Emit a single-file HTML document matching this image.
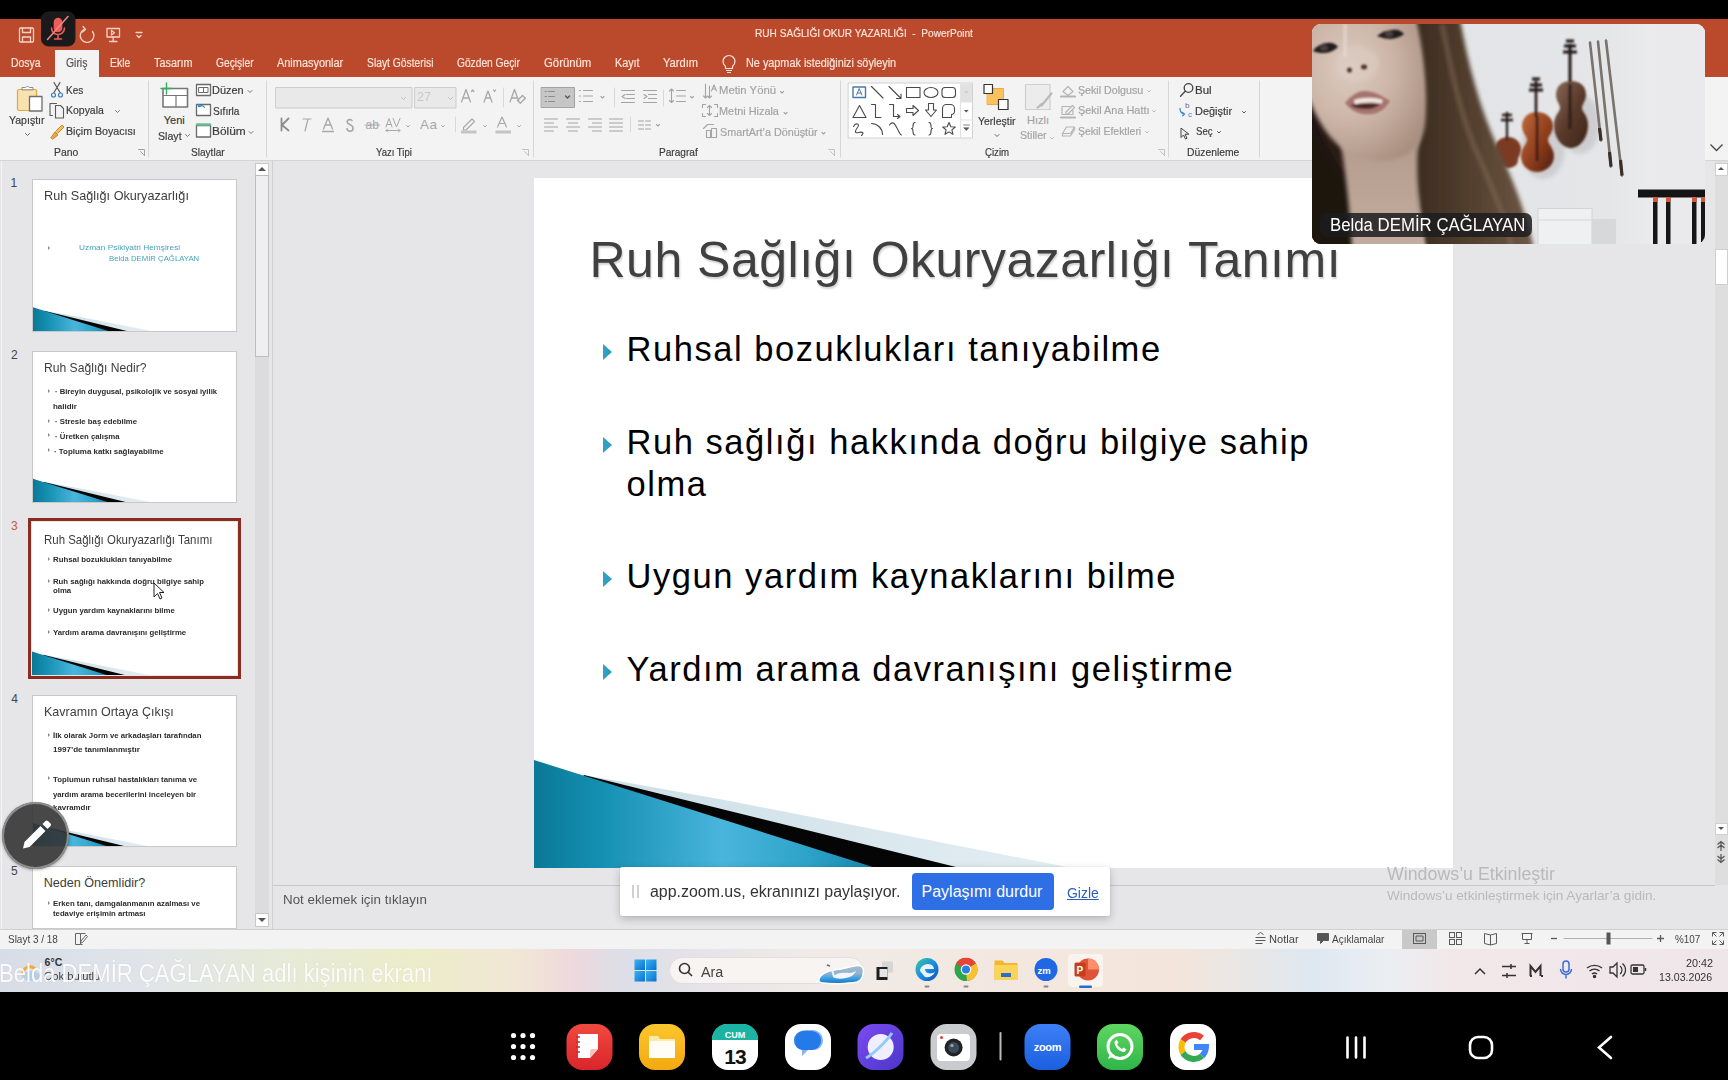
<!DOCTYPE html>
<html><head><meta charset="utf-8">
<style>
*{margin:0;padding:0;box-sizing:border-box}
html,body{width:1728px;height:1080px;overflow:hidden;background:#000;font-family:"Liberation Sans",sans-serif}
.a{position:absolute}
.t{position:absolute;white-space:nowrap;line-height:1}
.rb .t{-webkit-text-stroke:0.18px currentColor}
#title{left:0;top:19px;width:1728px;height:58px;background:#bb4a2c}
.tab{position:absolute;top:57px;font-size:12px;color:#fbe3d9;white-space:nowrap;line-height:1}
#ribbon{left:0;top:77px;width:1728px;height:84px;background:#f3f3f3;border-bottom:1px solid #d4d4d4}
.rb{position:absolute;font-size:11px;color:#333;white-space:nowrap;line-height:1}
.dis{color:#a8a8a8}
.gl{position:absolute;top:149px;font-size:11px;color:#444;white-space:nowrap;line-height:1}
.sep{position:absolute;top:82px;width:1px;height:76px;background:#d8d8d8}
#pane{left:0;top:161px;width:1728px;height:768px;background:#e6e6e8}
#status{left:0;top:929px;width:1728px;height:20px;background:#f3f3f3;border-top:1px solid #d0d0d0}
#taskbar{left:0;top:949px;width:1728px;height:43px;background:linear-gradient(90deg,#dfe3ec 0%,#e7ecf2 20%,#eef0dc 35%,#f1eedd 48%,#f3e6dc 62%,#e2ebf3 70%,#efe8ec 85%,#dde1ea 100%)}
#nav{left:0;top:992px;width:1728px;height:88px;background:#000}
#slide{left:534px;top:178px;width:919px;height:690px;background:#fff;overflow:hidden}
.thumb{position:absolute;left:32px;width:205px;height:154px;background:#fff;border:1px solid #c6c6c6;overflow:hidden}
.num{position:absolute;left:11px;font-size:13px;color:#444;line-height:1}
.tt{position:absolute;left:11px;top:12px;font-size:12.5px;color:#404040;white-space:nowrap;line-height:1}
.tb{position:absolute;font-size:7px;color:#2a2a2a;font-weight:bold;white-space:nowrap;line-height:1;letter-spacing:0.3px}
.tb:before{content:"";position:absolute;left:-5px;top:2px;border-left:2.5px solid #2a9ec0;border-top:2px solid transparent;border-bottom:2px solid transparent}
.bul{position:absolute;left:626.5px;font-size:34.5px;color:#000;letter-spacing:1.55px;white-space:nowrap;line-height:1}
.tri{position:absolute;left:603px;width:0;height:0;border-left:9px solid #2fa0c3;border-top:8px solid transparent;border-bottom:8px solid transparent}
</style></head>
<body>
<svg width="0" height="0" style="position:absolute"><defs>
<linearGradient id="bg1" x1="0" y1="0" x2="1" y2="0">
<stop offset="0" stop-color="#0a7896"/><stop offset="0.2" stop-color="#1590b2"/><stop offset="0.55" stop-color="#4ab5dc"/><stop offset="0.8" stop-color="#2ea3c9"/><stop offset="1" stop-color="#1288ae"/></linearGradient>
<linearGradient id="gg1" x1="0" y1="0" x2="1" y2="0">
<stop offset="0" stop-color="#c9dde6"/><stop offset="1" stop-color="#e4eef2"/></linearGradient>
<symbol id="wedge" viewBox="0 0 919 690" preserveAspectRatio="none">
<polygon points="50,597 196,623 538,690 0,690" fill="url(#gg1)"/>
<polygon points="50,597 426,690 0,690" fill="#050505"/>
<polygon points="0,582 50,597.8 196,643.8 342,690 0,690" fill="url(#bg1)"/>
</symbol></defs></svg>
<!-- title bar -->
<div id="title" class="a"></div>
<div class="rb">
<div class="t" style="left:754.8px;top:28.4px;font-size:11.00px;color:#fbe3d9;transform:scaleX(0.918);transform-origin:0 0;white-space:pre;">RUH SAĞLIĞI OKUR YAZARLIĞI  -  PowerPoint</div>
<div class="a" style="left:55px;top:50px;width:43.5px;height:28px;background:#f3f3f3"></div>
<div class="t" style="left:11.1px;top:57.3px;font-size:12.00px;color:#fbe3d9;transform:scaleX(0.868);transform-origin:0 0;">Dosya</div>
<div class="t" style="left:65.5px;top:57.3px;font-size:12.00px;color:#555;transform:scaleX(0.867);transform-origin:0 0;">Giriş</div>
<div class="t" style="left:110.2px;top:57.3px;font-size:12.00px;color:#fbe3d9;transform:scaleX(0.870);transform-origin:0 0;">Ekle</div>
<div class="t" style="left:153.8px;top:57.3px;font-size:12.00px;color:#fbe3d9;transform:scaleX(0.904);transform-origin:0 0;">Tasarım</div>
<div class="t" style="left:215.5px;top:57.3px;font-size:12.00px;color:#fbe3d9;transform:scaleX(0.856);transform-origin:0 0;">Geçişler</div>
<div class="t" style="left:277.0px;top:57.3px;font-size:12.00px;color:#fbe3d9;transform:scaleX(0.911);transform-origin:0 0;">Animasyonlar</div>
<div class="t" style="left:367.2px;top:57.3px;font-size:12.00px;color:#fbe3d9;transform:scaleX(0.859);transform-origin:0 0;">Slayt Gösterisi</div>
<div class="t" style="left:457.2px;top:57.3px;font-size:12.00px;color:#fbe3d9;transform:scaleX(0.851);transform-origin:0 0;">Gözden Geçir</div>
<div class="t" style="left:544.4px;top:57.3px;font-size:12.00px;color:#fbe3d9;transform:scaleX(0.945);transform-origin:0 0;">Görünüm</div>
<div class="t" style="left:614.5px;top:57.3px;font-size:12.00px;color:#fbe3d9;transform:scaleX(0.898);transform-origin:0 0;">Kayıt</div>
<div class="t" style="left:662.7px;top:57.3px;font-size:12.00px;color:#fbe3d9;transform:scaleX(0.926);transform-origin:0 0;">Yardım</div>
<div class="t" style="left:745.6px;top:57.3px;font-size:12.00px;color:#fbe3d9;transform:scaleX(0.904);transform-origin:0 0;">Ne yapmak istediğinizi söyleyin</div>
</div>
<!-- ribbon -->
<div id="ribbon" class="a"></div>
<svg class="a" style="left:0;top:0" width="1312" height="161" viewBox="0 0 1312 161" fill="none" stroke-linecap="round" stroke-linejoin="round">
<g stroke="#d6d6d6" stroke-width="1"><path d="M148.5 81V157M266.5 81V157M533.5 81V157M840.5 81V157M1168.5 81V157M1259.5 81V157"/></g>
<!-- QAT -->
<g stroke="#f7d2c4" stroke-width="1.3">
<rect x="19.5" y="28" width="14" height="14" rx="1"/><path d="M22.5 28v4.5h8V28M22.5 42v-5h8v5"/>
<path d="M92.5 31.5A6.8 6.8 0 1 1 84 29.5"/><path d="M83 26.5l2.5 3-3 2.5"/>
<rect x="107" y="28.5" width="12.5" height="8.5"/><path d="M113.2 37v4.5M109.5 41.5h7.5M111.5 30.5v4.5l3-2.2z"/>
<path d="M136 32.5h6M137 35.5l2 2 2-2"/>
</g>
<!-- mic overlay -->
<rect x="41.5" y="12" width="33.5" height="34" rx="7" fill="#1a1a1c" stroke="#2a1b18" stroke-width="1"/>
<g stroke="#ef5b5b" stroke-width="1.6"><rect x="54.5" y="18.5" width="7" height="13" rx="3.5" fill="#ef5b5b"/><path d="M51.5 28a6.5 6.5 0 0 0 13 0M58 34.5v4M54.5 39h7"/><path d="M68 16.5L47.5 39.5" stroke="#ec8b80" stroke-width="1.5"/></g>
<!-- close X over video right -->
<g stroke="#f5d6cc" stroke-width="1.4"><path d="M1705 29l8.5 8.5M1713.5 29l-8.5 8.5"/></g>
<!-- Pano icons -->
<rect x="17.5" y="89.5" width="19" height="21" rx="1.5" fill="#f8e2ae" stroke="#e0a640" stroke-width="1.2"/>
<path d="M22 89.5v-2h3.5a2.5 2.5 0 0 1 4 0H33v2z" fill="#fff" stroke="#8a8a8a" stroke-width="1"/>
<rect x="29.5" y="96.5" width="12.5" height="14.5" fill="#fff" stroke="#6f6f6f" stroke-width="1.3"/>
<path d="M25.5 133.5l2 2 2-2" stroke="#666" stroke-width="1"/>
<g stroke="#555" stroke-width="1.2"><path d="M54 82.5l6 10M60 82.5l-6 10"/><circle cx="53.5" cy="95" r="2" stroke="#3c7fbf"/><circle cx="60.5" cy="95" r="2" stroke="#3c7fbf"/></g>
<g stroke="#5a5a5a" stroke-width="1.1"><path d="M52.5 115.5h-2.5v-12h6.5"/><path d="M55.5 105.5h5l3 3v9.5h-8z"/></g>
<path d="M56 131l6-6 2 2-6 6z" fill="#f3c35a" stroke="#c9862a" stroke-width="1"/><path d="M51 137.5l4-5.5 3 3-5 4z" fill="#f0a640" stroke="#c9862a" stroke-width="1"/>
<path d="M115.5 110.5l2 2 2-2M185.5 134.5l2 2 2-2M248 90.5l2 2 2-2M249 131.5l2 2 2-2" stroke="#777" stroke-width="1"/>
<g stroke="#999" stroke-width="0.9"><path d="M138.5 149.5h6v6M140.5 151.5l4 4"/></g>
<!-- Slaytlar icons -->
<rect x="163" y="88.5" width="24.5" height="18.5" fill="#fff" stroke="#777" stroke-width="1.6"/><path d="M163.5 95.5h24M176 95.5v11" stroke="#777" stroke-width="1.2"/>
<path d="M166.5 83v11M161 88.5h11" stroke="#3aa860" stroke-width="1.4"/>
<rect x="196.5" y="84.5" width="14" height="11" fill="#fff" stroke="#6a6a6a" stroke-width="1.3"/><path d="M199 87.5h9v5h-9zM203.5 87.5v5" stroke="#6a6a6a" stroke-width="1"/>
<rect x="196.5" y="104.5" width="14" height="11" fill="#fff" stroke="#6a6a6a" stroke-width="1.3"/><path d="M198.5 106.5a4 4 0 0 1 6 1M198 104.5l0.8 2.2 2.2-0.6" stroke="#3c89c9" stroke-width="1.2"/>
<rect x="196.5" y="125.5" width="14" height="11.5" fill="#fff" stroke="#6a6a6a" stroke-width="1.3"/><path d="M197 124.5h13" stroke="#6bbf8e" stroke-width="2.4"/>
<!-- Yazi tipi -->
<rect x="276" y="87.5" width="136" height="20.5" fill="#e9e9e9" stroke="#cdcdcd" stroke-width="1"/>
<rect x="415" y="87.5" width="41" height="20.5" fill="#e9e9e9" stroke="#cdcdcd" stroke-width="1"/>
<path d="M401.5 97.5l2 2 2-2M448.5 97.5l2 2 2-2" stroke="#bbb" stroke-width="1"/>
<g stroke="#a8a8a8" stroke-width="1.3">
<path d="M461.5 102l4.5-12.5 4.5 12.5M463.2 98h5.6M471.5 91.5l1.2-1.5 1.2 1.5"/>
<path d="M484 102l4-11 4 11M485.5 98h5M493.5 90l1 1.5 1-1.5"/>
<path d="M503.5 88v19" stroke="#d8d8d8" stroke-width="1"/>
<path d="M510 102l4.5-12.5 4.5 12.5M511.7 98h5.6M517.5 100.5l5-5 2.8 2.8-5 5z"/>
<path d="M281.5 118.5v12M288.5 118.5l-6.5 6.5 6.5 5.5" stroke="#8c8c8c" stroke-width="1.8"/>
<path d="M303 119h8M308 119l-3 12" stroke-width="1.2"/>
<path d="M323.5 129l4.5-11 4.5 11M325.2 125h5.6M322.5 131.5h11"/>
<path d="M352 120.5a3 3 0 0 0-5 1c0 3.5 6 2.5 6 6.5a3 3 0 0 1-6 0.5" stroke-width="1.6"/>
<path d="M365 125h14.5" stroke-width="1.1"/>
<path d="M386 127l3-8.5 3 8.5M387 124.5h4M393 118.5l3.5 8.5 3.5-8.5M386 130.5h14M387.5 129l-1.5 1.5 1.5 1.5M398.5 129l1.5 1.5-1.5 1.5" stroke-width="1"/>
<path d="M406.5 125.5l1.5 1.5 1.5-1.5M441.5 125.5l1.5 1.5 1.5-1.5M483.5 125.5l1.5 1.5 1.5-1.5M517.5 125.5l1.5 1.5 1.5-1.5" stroke-width="1"/>

<path d="M455.5 117v15" stroke="#d8d8d8" stroke-width="1"/>
<path d="M463.5 127.5l8.5-8.5 2.5 2.5-8.5 8.5h-2.5z" stroke-width="1.2"/>
<path d="M497.5 127l4.5-10 4.5 10M499 123.5h6" stroke-width="1.2"/>
</g>
<rect x="461" y="130.5" width="15.5" height="3" fill="#c4c4c4"/><rect x="495.5" y="130.5" width="15.5" height="3" fill="#c4c4c4"/>
<g stroke="#bbb" stroke-width="0.9"><path d="M522.5 149.5h6v6M524.5 151.5l4 4M828.5 149.5h6v6M830.5 151.5l4 4M1158.5 149.5h6v6M1160.5 151.5l4 4"/></g>
<!-- Paragraf -->
<rect x="541.5" y="87.5" width="33" height="20" fill="#c6c6c6" stroke="#a3a3a3" stroke-width="1"/>
<g stroke="#8d8d8d" stroke-width="1"><path d="M545 91.5h1.5M548.5 91.5h6M545 96.5h1.5M548.5 96.5h6M545 101.5h1.5M548.5 101.5h6"/><path d="M565.5 96l2 2 2-2" stroke="#555" stroke-width="1.3"/></g>
<g stroke="#a4a4a4" stroke-width="1.1">
<path d="M579.5 90.5h1M579.5 96h1M579.5 101.5h1M583.5 90.5h9M583.5 96h9M583.5 101.5h9"/><path d="M601 96.5l1.5 1.5 1.5-1.5M690.5 96.5l1.5 1.5 1.5-1.5"/>
<path d="M614.5 88v19M663.5 90v16" stroke="#d8d8d8" stroke-width="1"/>
<path d="M621.5 90.5h13M626.5 94.5h8M626.5 98.5h8M621.5 102.5h13M625 94.5l-3 2 3 2"/>
<path d="M643.5 90.5h13M648.5 94.5h8M648.5 98.5h8M643.5 102.5h13M644 94.5l3 2-3 2"/>
<path d="M676.5 90.5h9M676.5 96h9M676.5 101.5h9M671.5 89v13.5M669.5 91l2-2 2 2M669.5 100.5l2 2 2-2"/>
<path d="M705.5 84v14M703.5 96l2 2 2-2M709.5 86v12M707.5 96l2 2 2-2M711.5 91l2.5-6 2.5 6M712.3 89h3.5"/>
<path d="M702.5 104.5h3M702.5 104.5v3M717.5 104.5h-3M717.5 104.5v3M702.5 116.5h3M702.5 116.5v-3M717.5 116.5h-3M717.5 116.5v-3M709.5 105.5v10M707.5 107.5l2-2 2 2M707.5 113.5l2 2 2-2"/>
<path d="M703.5 128.5l4-4h6M706.5 130.5h4v7h-4zM711.5 128.5h5v9h-5z"/>
<path d="M780.5 91.5l1.5 1.5 1.5-1.5M784 112.5l1.5 1.5 1.5-1.5M822 132.5l1.5 1.5 1.5-1.5"/>
<path d="M544.5 119h13M544.5 123h9M544.5 127h13M544.5 131h9"/>
<path d="M566.5 119h13M568.5 123h9M566.5 127h13M568.5 131h9"/>
<path d="M588.5 119h13M592.5 123h9M588.5 127h13M592.5 131h9"/>
<path d="M609.5 119h13M609.5 123h13M609.5 127h13M609.5 131h13"/>
<path d="M630.5 117v15" stroke="#d8d8d8" stroke-width="1"/>
<path d="M638.5 121h5M638.5 125h5M638.5 129h5M645.5 121h5M645.5 125h5M645.5 129h5M656.5 124.5l1.5 1.5 1.5-1.5"/>
</g>
<!-- Cizim gallery -->
<rect x="848.5" y="83" width="124" height="55" fill="#fff" stroke="#d2d2d2" stroke-width="1"/>
<rect x="960.5" y="83.5" width="11.5" height="18.5" fill="#e1e1e1"/>
<path d="M960.5 83v55M960.5 102h12M960.5 120h12" stroke="#e3e3e3" stroke-width="1"/>
<path d="M965 92h2.5" stroke="#bbb" stroke-width="1"/>
<path d="M964 110l2.3 2.5 2.3-2.5z" fill="#555"/><path d="M963.5 125h6M964 128l2.3 2.5 2.3-2.5z" stroke="#666" stroke-width="0.8" fill="#555"/>
<g stroke="#4a4a4a" stroke-width="1.1">
<rect x="853" y="87" width="12.5" height="10.5" stroke="#4a79a7" stroke-width="1.4"/><path d="M856.5 95l2.7-6.5 2.7 6.5M857.5 93h3.5" stroke="#4a79a7" stroke-width="1"/>
<path d="M871.5 86.5l11.5 11.5"/><path d="M889 86.5l11.5 11.5M901 98.5v-4.5M901 98.5h-4.5"/>
<rect x="906.5" y="87.5" width="13.5" height="10"/><ellipse cx="931" cy="92.5" rx="7" ry="5"/><rect x="942" y="87.5" width="13.5" height="10" rx="3"/>
<path d="M853 117.5l6.5-12 6.5 12z"/><path d="M871.5 104.5h4v13h5.5"/><path d="M889.5 104.5h4v12h6M897.5 114.5l2.5 2-2.5 2"/>
<path d="M906.5 108.5h6.5v-3l5.5 5-5.5 5v-3h-6.5z"/><path d="M928.5 103.5h5v6.5h3l-5.5 6.5-5.5-6.5h3z"/>
<path d="M942.5 117.5v-9a4 4 0 0 1 4-4h4a4 4 0 0 1 4 4v3a3 3 0 0 1-3 3v3z"/>
<path d="M853.5 126.5c2-4 7-3 4 1s-3 6 1 5 6 0 3 3"/><path d="M871.5 123.5c6 0 11 5 11 11"/><path d="M889.5 125c4-6 7 2 9 6s3 4 3 4"/>
<path d="M915 122.5c-2 0-2 1.5-2 3.5s0 2.5-1.5 2.5c1.5 0 1.5 1 1.5 3s0 3.5 2 3.5"/><path d="M929 122.5c2 0 2 1.5 2 3.5s0 2.5 1.5 2.5c-1.5 0-1.5 1-1.5 3s0 3.5-2 3.5"/>
<path d="M949 122.5l1.8 4.2 4.5.3-3.4 2.9 1.1 4.4-4-2.4-4 2.4 1.1-4.4-3.4-2.9 4.5-.3z"/>
</g>
<!-- Yerlestir -->
<rect x="987.5" y="88.5" width="16" height="16" fill="#f9c25f" stroke="#f0a93a" stroke-width="1"/>
<rect x="984" y="84.5" width="8.5" height="9" fill="#fff" stroke="#333" stroke-width="1.2"/>
<rect x="998.5" y="99.5" width="9.5" height="10" fill="#fff" stroke="#333" stroke-width="1.2"/>
<path d="M995 134.5l2 2 2-2" stroke="#666" stroke-width="1"/>
<!-- Hizli stiller -->
<rect x="1025.5" y="84.5" width="24.5" height="25" fill="#ececec" stroke="#cfcfcf" stroke-width="1.2"/>
<path d="M1051.5 93.5l-10 12M1042 104c-2 1-3 3-4.5 3.5" stroke="#b9b9b9" stroke-width="2.2"/>
<path d="M1050.5 137.5l1.5 1.5 1.5-1.5M1147.5 90.5l1.5 1.5 1.5-1.5M1152.5 110.5l1.5 1.5 1.5-1.5M1145.5 131.5l1.5 1.5 1.5-1.5" stroke="#bbb" stroke-width="1"/>
<g stroke="#b5b5b5" stroke-width="1.2">
<path d="M1063 91.5l5-5 5 5-5 4z"/><path d="M1061 96.5h14" stroke-width="2.2"/>
<path d="M1062 106.5h8M1062 106.5v8h11v-4M1066 112l6.5-6.5 2 2-6.5 6.5h-2z"/><path d="M1061 117.5h14" stroke-width="2.2"/>
<path d="M1062.5 133.5l4-6.5h8l-4 6.5z M1062.5 133.5v2.5h8l4-6.5v-2.5"/>
</g>
<!-- Duzenleme -->
<g stroke="#444" stroke-width="1.3"><circle cx="1188.5" cy="88" r="4.3"/><path d="M1185.3 91.3l-4.8 5"/>
<path d="M1181 128.5v9l2.5-2.5 2 4 1.5-.8-2-4h3.5z" stroke-width="1"/>
<path d="M1242.5 111.5l1.5 1.5 1.5-1.5M1217.5 131.5l1.5 1.5 1.5-1.5" stroke="#555" stroke-width="1"/></g>
<path d="M1180 108.5c0 3 1.5 5 4.5 5.5M1182.5 112.5l2 1.5-1.8 1.8" stroke="#3a8dd0" stroke-width="1.3"/>
<text x="1185" y="108" font-size="8" fill="#7a59b6" font-family="Liberation Sans">b</text><text x="1188" y="117" font-size="8" fill="#3a8dd0" font-family="Liberation Sans">c</text>
<!-- ribbon collapse chevron -->
</svg>
<svg class="a" style="left:1700px;top:140px" width="28" height="16"><path d="M10.5 4.5l6 6 6-6" stroke="#444" stroke-width="1.3" fill="none"/></svg>
<div class="t" style="left:417px;top:91px;font-size:12.5px;color:#c9c9c9">27</div>
<div class="t" style="left:420px;top:118px;font-size:13.5px;color:#a8a8a8;letter-spacing:0.5px">Aa</div>
<div class="t" style="left:365.5px;top:119px;font-size:12px;color:#a8a8a8">ab</div>
<div class="rb"><div class="t" style="left:9.1px;top:115.4px;font-size:11.00px;color:#3b3b3b;transform:scaleX(0.958);transform-origin:0 0;">Yapıştır</div>
<div class="t" style="left:66.2px;top:84.7px;font-size:11.00px;color:#3b3b3b;transform:scaleX(0.903);transform-origin:0 0;">Kes</div>
<div class="t" style="left:66.2px;top:105.2px;font-size:11.00px;color:#3b3b3b;transform:scaleX(0.952);transform-origin:0 0;">Kopyala</div>
<div class="t" style="left:66.1px;top:126.3px;font-size:11.00px;color:#3b3b3b;transform:scaleX(0.968);transform-origin:0 0;">Biçim Boyacısı</div>
<div class="t" style="left:54.2px;top:146.7px;font-size:11.00px;color:#3b3b3b;transform:scaleX(0.944);transform-origin:0 0;">Pano</div>
<div class="t" style="left:163.7px;top:115.4px;font-size:11.00px;color:#3b3b3b;">Yeni</div>
<div class="t" style="left:157.5px;top:130.7px;font-size:11.00px;color:#3b3b3b;transform:scaleX(0.964);transform-origin:0 0;">Slayt</div>
<div class="t" style="left:212.1px;top:84.7px;font-size:11.00px;color:#3b3b3b;transform:scaleX(0.994);transform-origin:0 0;">Düzen</div>
<div class="t" style="left:212.5px;top:105.7px;font-size:11.00px;color:#3b3b3b;transform:scaleX(0.921);transform-origin:0 0;">Sıfırla</div>
<div class="t" style="left:212.0px;top:125.7px;font-size:11.00px;color:#3b3b3b;transform:scaleX(1.081);transform-origin:0 0;">Bölüm</div>
<div class="t" style="left:190.5px;top:146.7px;font-size:11.00px;color:#3b3b3b;transform:scaleX(0.917);transform-origin:0 0;">Slaytlar</div>
<div class="t" style="left:375.8px;top:146.7px;font-size:11.00px;color:#3b3b3b;transform:scaleX(0.867);transform-origin:0 0;">Yazı Tipi</div>
<div class="t" style="left:719.1px;top:85.3px;font-size:11.00px;color:#a3a3a3;transform:scaleX(1.028);transform-origin:0 0;">Metin Yönü</div>
<div class="t" style="left:719.1px;top:105.7px;font-size:11.00px;color:#a3a3a3;transform:scaleX(0.990);transform-origin:0 0;">Metni Hizala</div>
<div class="t" style="left:719.5px;top:126.7px;font-size:11.00px;color:#a3a3a3;transform:scaleX(0.980);transform-origin:0 0;">SmartArt’a Dönüştür</div>
<div class="t" style="left:659.2px;top:146.7px;font-size:11.00px;color:#3b3b3b;transform:scaleX(0.919);transform-origin:0 0;">Paragraf</div>
<div class="t" style="left:977.7px;top:115.5px;font-size:11.00px;color:#3b3b3b;transform:scaleX(0.952);transform-origin:0 0;">Yerleştir</div>
<div class="t" style="left:1027.1px;top:114.7px;font-size:11.00px;color:#a3a3a3;">Hızlı</div>
<div class="t" style="left:1019.5px;top:129.7px;font-size:11.00px;color:#a3a3a3;transform:scaleX(0.969);transform-origin:0 0;">Stiller</div>
<div class="t" style="left:984.5px;top:146.7px;font-size:11.00px;color:#3b3b3b;transform:scaleX(0.877);transform-origin:0 0;">Çizim</div>
<div class="t" style="left:1077.5px;top:84.7px;font-size:11.00px;color:#a3a3a3;transform:scaleX(0.969);transform-origin:0 0;">Şekil Dolgusu</div>
<div class="t" style="left:1077.5px;top:104.7px;font-size:11.00px;color:#a3a3a3;transform:scaleX(0.991);transform-origin:0 0;">Şekil Ana Hattı</div>
<div class="t" style="left:1077.5px;top:125.7px;font-size:11.00px;color:#a3a3a3;transform:scaleX(0.948);transform-origin:0 0;">Şekil Efektleri</div>
<div class="t" style="left:1195.1px;top:84.7px;font-size:11.00px;color:#3b3b3b;transform:scaleX(1.049);transform-origin:0 0;">Bul</div>
<div class="t" style="left:1195.1px;top:105.7px;font-size:11.00px;color:#3b3b3b;transform:scaleX(0.995);transform-origin:0 0;">Değiştir</div>
<div class="t" style="left:1195.6px;top:125.7px;font-size:11.00px;color:#3b3b3b;transform:scaleX(0.879);transform-origin:0 0;">Seç</div>
<div class="t" style="left:1187.2px;top:146.7px;font-size:11.00px;color:#3b3b3b;transform:scaleX(0.940);transform-origin:0 0;">Düzenleme</div></div>
<!-- /ribbon -->

<!-- panes -->
<div id="pane" class="a"></div>


<!-- thumbnail pane -->
<div class="a" style="left:1px;top:161px;width:1px;height:768px;background:#f4f4f5"></div>
<div class="a" style="left:272px;top:161px;width:1px;height:768px;background:#d0d0d2"></div>
<div class="a" style="left:255px;top:163px;width:14px;height:764px;background:#dcdcde"></div>
<div class="a" style="left:255px;top:163px;width:14px;height:13px;background:#fff;border:1px solid #c8c8c8"></div>
<div class="a" style="left:258px;top:167px;width:0;height:0;border-left:4px solid transparent;border-right:4px solid transparent;border-bottom:4px solid #555"></div>
<div class="a" style="left:255px;top:175px;width:14px;height:182px;background:#efeff1;border:1px solid #bdbdbd"></div>
<div class="a" style="left:255px;top:913px;width:14px;height:14px;background:#fff;border:1px solid #c8c8c8"></div>
<div class="a" style="left:258px;top:918px;width:0;height:0;border-left:4px solid transparent;border-right:4px solid transparent;border-top:4px solid #555"></div>
<div class="t" style="left:10.6px;top:176.6px;font-size:12.00px;color:#444;">1</div>
<div class="t" style="left:10.9px;top:348.8px;font-size:12.00px;color:#444;">2</div>
<div class="t" style="left:11.0px;top:520.3px;font-size:12.00px;color:#c8574a;">3</div>
<div class="t" style="left:11.3px;top:693.3px;font-size:12.00px;color:#444;">4</div>
<div class="t" style="left:11.0px;top:864.8px;font-size:12.00px;color:#444;">5</div>
<div class="a" style="left:32px;top:178.5px;width:204.5px;height:153.0px;background:#fff;border:1px solid #c9c9c9;overflow:hidden"><svg class="a" style="left:0;top:0" width="100%" height="100%" viewBox="0 0 919 690" preserveAspectRatio="none"><use href="#wedge"/></svg></div>
<div class="t" style="left:43.6px;top:190.0px;font-size:12.60px;color:#3d3d3d;transform:scaleX(1.005);transform-origin:0 0;">Ruh Sağlığı Okuryazarlığı</div>
<div class="a" style="left:48.0px;top:245.5px;width:0;height:0;border-left:2.5px solid #8a8a8a;border-top:2px solid transparent;border-bottom:2px solid transparent"></div>
<div class="t" style="left:78.9px;top:243.9px;font-size:7.00px;color:#45a3b8;transform:scaleX(1.188);transform-origin:0 0;">Uzman Psikiyatri Hemşiresi</div>
<div class="t" style="left:109.2px;top:255.0px;font-size:7.00px;color:#45a3b8;transform:scaleX(1.107);transform-origin:0 0;">Belda DEMİR ÇAĞLAYAN</div>
<div class="a" style="left:32px;top:350.7px;width:204.5px;height:152.3px;background:#fff;border:1px solid #c9c9c9;overflow:hidden"><svg class="a" style="left:0;top:0" width="100%" height="100%" viewBox="0 0 919 690" preserveAspectRatio="none"><use href="#wedge"/></svg></div>
<div class="t" style="left:43.6px;top:362.1px;font-size:12.60px;color:#3d3d3d;transform:scaleX(0.963);transform-origin:0 0;">Ruh Sağlığı Nedir?</div>
<div class="a" style="left:48.0px;top:389.3px;width:0;height:0;border-left:2.5px solid #8a8a8a;border-top:2px solid transparent;border-bottom:2px solid transparent"></div><div class="t" style="left:54.5px;top:388.4px;font-size:7.00px;color:#2b2b2b;font-weight:bold;transform:scaleX(1.096);transform-origin:0 0;">· Bireyin duygusal, psikolojik ve sosyal iyilik</div>
<div class="t" style="left:52.6px;top:402.6px;font-size:7.00px;color:#2b2b2b;font-weight:bold;transform:scaleX(1.137);transform-origin:0 0;">halidir</div>
<div class="a" style="left:48.0px;top:418.8px;width:0;height:0;border-left:2.5px solid #8a8a8a;border-top:2px solid transparent;border-bottom:2px solid transparent"></div><div class="t" style="left:54.5px;top:417.9px;font-size:7.00px;color:#2b2b2b;font-weight:bold;transform:scaleX(1.110);transform-origin:0 0;">· Stresle baş edebilme</div>
<div class="a" style="left:48.0px;top:433.4px;width:0;height:0;border-left:2.5px solid #8a8a8a;border-top:2px solid transparent;border-bottom:2px solid transparent"></div><div class="t" style="left:54.5px;top:432.5px;font-size:7.00px;color:#2b2b2b;font-weight:bold;transform:scaleX(1.112);transform-origin:0 0;">· Üretken çalışma</div>
<div class="a" style="left:48.0px;top:448.4px;width:0;height:0;border-left:2.5px solid #8a8a8a;border-top:2px solid transparent;border-bottom:2px solid transparent"></div><div class="t" style="left:54.4px;top:447.5px;font-size:7.00px;color:#2b2b2b;font-weight:bold;transform:scaleX(1.133);transform-origin:0 0;">· Topluma katkı sağlayabilme</div>
<div class="a" style="left:28px;top:518px;width:213px;height:161px;border:3.8px solid #8c2c21"></div>
<div class="a" style="left:32px;top:521.5px;width:204.5px;height:153.5px;background:#fff;overflow:hidden"><svg class="a" style="left:0;top:0" width="100%" height="100%" viewBox="0 0 919 690" preserveAspectRatio="none"><use href="#wedge"/></svg></div>
<div class="t" style="left:43.5px;top:534.1px;font-size:12.20px;color:#3d3d3d;transform:scaleX(0.939);transform-origin:0 0;">Ruh Sağlığı Okuryazarlığı Tanımı</div>
<div class="a" style="left:48.0px;top:557.0px;width:0;height:0;border-left:2.5px solid #8a8a8a;border-top:2px solid transparent;border-bottom:2px solid transparent"></div><div class="t" style="left:52.5px;top:556.1px;font-size:7.00px;color:#2b2b2b;font-weight:bold;transform:scaleX(1.117);transform-origin:0 0;">Ruhsal bozuklukları tanıyabilme</div>
<div class="a" style="left:48.0px;top:578.7px;width:0;height:0;border-left:2.5px solid #8a8a8a;border-top:2px solid transparent;border-bottom:2px solid transparent"></div><div class="t" style="left:52.5px;top:577.8px;font-size:7.00px;color:#2b2b2b;font-weight:bold;transform:scaleX(1.109);transform-origin:0 0;">Ruh sağlığı hakkında doğru bilgiye sahip</div>
<div class="t" style="left:52.7px;top:586.7px;font-size:7.00px;color:#2b2b2b;font-weight:bold;transform:scaleX(1.109);transform-origin:0 0;">olma</div>
<div class="a" style="left:48.0px;top:608.3px;width:0;height:0;border-left:2.5px solid #8a8a8a;border-top:2px solid transparent;border-bottom:2px solid transparent"></div><div class="t" style="left:52.5px;top:607.4px;font-size:7.00px;color:#2b2b2b;font-weight:bold;transform:scaleX(1.114);transform-origin:0 0;">Uygun yardım kaynaklarını bilme</div>
<div class="a" style="left:48.0px;top:629.8px;width:0;height:0;border-left:2.5px solid #8a8a8a;border-top:2px solid transparent;border-bottom:2px solid transparent"></div><div class="t" style="left:52.8px;top:628.9px;font-size:7.00px;color:#2b2b2b;font-weight:bold;transform:scaleX(1.111);transform-origin:0 0;">Yardım arama davranışını geliştirme</div>
<svg class="a" style="left:153px;top:582px" width="14" height="20" viewBox="0 0 14 20"><path d="M1 1 L1 15 L4.5 11.5 L7 17 L9 16 L6.5 10.5 L11 10.5 Z" fill="#fff" stroke="#222" stroke-width="1"/></svg>
<div class="a" style="left:32px;top:694.5px;width:204.5px;height:152.7px;background:#fff;border:1px solid #c9c9c9;overflow:hidden"><svg class="a" style="left:0;top:0" width="100%" height="100%" viewBox="0 0 919 690" preserveAspectRatio="none"><use href="#wedge"/></svg></div>
<div class="t" style="left:43.7px;top:705.6px;font-size:12.60px;color:#3d3d3d;transform:scaleX(0.992);transform-origin:0 0;">Kavramın Ortaya Çıkışı</div>
<div class="a" style="left:48.0px;top:732.6px;width:0;height:0;border-left:2.5px solid #8a8a8a;border-top:2px solid transparent;border-bottom:2px solid transparent"></div><div class="t" style="left:52.8px;top:731.7px;font-size:7.00px;color:#2b2b2b;font-weight:bold;transform:scaleX(1.109);transform-origin:0 0;">İlk olarak Jorm ve arkadaşları tarafından</div>
<div class="t" style="left:52.8px;top:746.1px;font-size:7.00px;color:#2b2b2b;font-weight:bold;transform:scaleX(1.150);transform-origin:0 0;">1997’de tanımlanmıştır</div>
<div class="a" style="left:48.0px;top:776.4px;width:0;height:0;border-left:2.5px solid #8a8a8a;border-top:2px solid transparent;border-bottom:2px solid transparent"></div><div class="t" style="left:53.2px;top:775.5px;font-size:7.00px;color:#2b2b2b;font-weight:bold;transform:scaleX(1.117);transform-origin:0 0;">Toplumun ruhsal hastalıkları tanıma ve</div>
<div class="t" style="left:53.2px;top:790.7px;font-size:7.00px;color:#2b2b2b;font-weight:bold;transform:scaleX(1.104);transform-origin:0 0;">yardım arama becerilerini inceleyen bir</div>
<div class="t" style="left:52.7px;top:803.9px;font-size:7.00px;color:#2b2b2b;font-weight:bold;transform:scaleX(1.126);transform-origin:0 0;">kavramdır</div>
<div class="a" style="left:32px;top:865.8px;width:204.5px;height:63.0px;background:#fff;border:1px solid #c9c9c9;overflow:hidden"></div>
<div class="t" style="left:43.7px;top:877.3px;font-size:12.60px;color:#3d3d3d;">Neden Önemlidir?</div>
<div class="a" style="left:48.0px;top:901.2px;width:0;height:0;border-left:2.5px solid #8a8a8a;border-top:2px solid transparent;border-bottom:2px solid transparent"></div><div class="t" style="left:52.8px;top:900.3px;font-size:7.00px;color:#2b2b2b;font-weight:bold;transform:scaleX(1.115);transform-origin:0 0;">Erken tanı, damgalanmanın azalması ve</div>
<div class="t" style="left:53.2px;top:910.1px;font-size:7.00px;color:#2b2b2b;font-weight:bold;transform:scaleX(1.106);transform-origin:0 0;">tedaviye erişimin artması</div>
<!-- /thumbs -->

<!-- main slide -->
<div id="slide" class="a"><svg class="a" style="left:0;top:0" width="919" height="690" viewBox="0 0 919 690"><use href="#wedge"/></svg></div>
<div class="t" style="left:589.5px;top:234.5px;font-size:50px;color:#404040;letter-spacing:0.5px;text-shadow:1px 2px 2px rgba(0,0,0,0.18)">Ruh Sağlığı Okuryazarlığı Tanımı</div>
<div class="tri" style="top:344px"></div>
<div class="bul" style="top:332px">Ruhsal bozuklukları tanıyabilme</div>
<div class="tri" style="top:437px"></div>
<div class="bul" style="top:425px">Ruh sağlığı hakkında doğru bilgiye sahip</div>
<div class="bul" style="top:467px">olma</div>
<div class="tri" style="top:571px"></div>
<div class="bul" style="top:559px">Uygun yardım kaynaklarını bilme</div>
<div class="tri" style="top:664px"></div>
<div class="bul" style="top:652px">Yardım arama davranışını geliştirme</div>

<div id="status" class="a"></div>
<!-- bottom -->
<div class="a" style="left:1715px;top:161px;width:13px;height:724px;background:#dededf"></div>
<div class="a" style="left:1715px;top:163px;width:13px;height:13px;background:#fff;border:1px solid #cfcfcf"></div>
<div class="a" style="left:1718px;top:167px;width:0;height:0;border-left:3.5px solid transparent;border-right:3.5px solid transparent;border-bottom:3.5px solid #555"></div>
<div class="a" style="left:1715px;top:249px;width:13px;height:36px;background:#fff;border:1px solid #cfcfcf"></div>
<div class="a" style="left:1715px;top:823px;width:13px;height:12px;background:#fff;border:1px solid #cfcfcf"></div>
<div class="a" style="left:1718px;top:827px;width:0;height:0;border-left:3.5px solid transparent;border-right:3.5px solid transparent;border-top:3.5px solid #555"></div>
<svg class="a" style="left:1714px;top:838px" width="14" height="28" fill="none" stroke="#555" stroke-width="1.2"><path d="M3.5 6.5l3.5-3 3.5 3M3.5 10l3.5-3 3.5 3M7 4v9"/><path d="M3.5 18l3.5 3 3.5-3M3.5 21.5l3.5 3 3.5-3M7 16v8"/></svg>
<div class="a" style="left:273px;top:885px;width:1442px;height:1px;background:#c9c9cb"></div>
<div class="t" style="left:282.9px;top:894.4px;font-size:12.50px;color:#555;transform:scaleX(1.068);transform-origin:0 0;">Not eklemek için tıklayın</div>
<div class="t" style="left:1386.9px;top:865.9px;font-size:17.50px;color:#b9b9bb;transform:scaleX(1.016);transform-origin:0 0;">Windows’u Etkinleştir</div>
<div class="t" style="left:1386.9px;top:889.0px;font-size:13.00px;color:#b9b9bb;transform:scaleX(1.043);transform-origin:0 0;">Windows’u etkinleştirmek için Ayarlar’a gidin.</div>
<div class="t" style="left:7.6px;top:933.9px;font-size:11.00px;color:#444;transform:scaleX(0.906);transform-origin:0 0;">Slayt 3 / 18</div>
<svg class="a" style="left:70px;top:930px" width="20" height="18" fill="none" stroke="#666" stroke-width="1"><path d="M5.5 3.5h5v11h-5zM10.5 3.5h5M10.5 14.5h2"/><path d="M11 11l5-6 1.5 1.5-5 6-2 .5z"/></svg>
<div class="t" style="left:1269.1px;top:933.9px;font-size:11.00px;color:#444;transform:scaleX(1.008);transform-origin:0 0;">Notlar</div>
<div class="t" style="left:1331.8px;top:933.9px;font-size:11.00px;color:#444;transform:scaleX(0.912);transform-origin:0 0;">Açıklamalar</div>
<div class="a" style="left:1401.5px;top:929.5px;width:35.5px;height:19px;background:#c9c9c9"></div>
<svg class="a" style="left:1240px;top:929px" width="488" height="20" fill="none" stroke="#5a5a5a" stroke-width="1">
<path d="M17.5 5.5l3-2 3 2M15.5 8.5h10M15.5 11.5h10M15.5 14.5h7"/>
<path d="M77.5 4.5h11v7h-5l-3 3v-3h-3z" fill="#555"/>
<rect x="173.5" y="4.5" width="12" height="10"/><path d="M176 7h7v5h-7z"/>
<rect x="209.5" y="3.5" width="5" height="5"/><rect x="216.5" y="3.5" width="5" height="5"/><rect x="209.5" y="10.5" width="5" height="5"/><rect x="216.5" y="10.5" width="5" height="5"/>
<path d="M244.5 4.5l6 1.5 6-1.5v10l-6 1.5-6-1.5zM250.5 6v10"/>
<path d="M281.5 4.5h11M282.5 4.5v6h9v-6M287 10.5v4M284.5 14.5h5"/>
<path d="M311 9.5h6" stroke-width="1.3"/><path d="M323.5 9.5h89" stroke="#b0b0b0"/><rect x="366.5" y="3.5" width="4" height="12" fill="#555" stroke="none"/>
<path d="M417 9.5h7M420.5 6v7" stroke-width="1.3"/>
<path d="M472.5 3.5h4M472.5 3.5v4M483.5 3.5h-4M483.5 3.5v4M472.5 15.5h4M472.5 15.5v-4M483.5 15.5h-4M483.5 15.5v-4M473 4l3.5 3.5M483 4l-3.5 3.5M473 15l3.5-3.5M483 15l-3.5-3.5"/>
</svg>
<div class="t" style="left:1675.3px;top:933.9px;font-size:11.00px;color:#444;transform:scaleX(0.898);transform-origin:0 0;">%107</div>
<div class="a" style="left:620px;top:867px;width:490px;height:48.5px;background:#fff;box-shadow:0 3px 8px rgba(0,0,0,0.22),0 0 1px rgba(0,0,0,0.2);border-radius:2px"></div>
<div class="a" style="left:631.5px;top:885px;width:2px;height:13px;background:#cfcfd4"></div><div class="a" style="left:636.5px;top:885px;width:2px;height:13px;background:#cfcfd4"></div>
<div class="t" style="left:649.6px;top:884.0px;font-size:16.00px;color:#333;transform:scaleX(0.995);transform-origin:0 0;">app.zoom.us, ekranınızı paylaşıyor.</div>
<div class="a" style="left:911.5px;top:873px;width:142.5px;height:36.5px;background:#2e6fe6;border-radius:4px"></div>
<div class="t" style="left:921.5px;top:884.0px;font-size:16.00px;color:#fff;">Paylaşımı durdur</div>
<div class="t" style="left:1066.9px;top:884.8px;font-size:15.00px;color:#2d5fb9;transform:scaleX(0.930);transform-origin:0 0;text-decoration:underline;">Gizle</div>
<!-- /bottom -->
<!-- taskbar -->
<div class="a" style="left:0;top:949px;width:1728px;height:43px;background:linear-gradient(90deg,#d8dce6 0%,#e0e4ea 8%,#e6ead8 16%,#ecedc9 24%,#f1e6d6 30%,#eed9dc 33%,#dddee8 36%,#f0ebe8 47%,#f3e7df 60%,#f3e5da 68%,#dee8f1 76%,#eaeef2 80%,#f2e8ea 84%,#efe6ea 100%)"></div>
<svg class="a" style="left:14px;top:955px" width="30" height="30"><path d="M9 20a7 7 0 0 1 12-6" stroke="#f2a93a" stroke-width="3" fill="none"/><ellipse cx="17" cy="21" rx="9" ry="5" fill="#b8cde6"/></svg>
<div class="t" style="left:44.6px;top:957.1px;font-size:10.50px;color:#333;font-weight:bold;">6°C</div>
<div class="t" style="left:44.4px;top:972.3px;font-size:10.00px;color:#444;transform:scaleX(1.126);transform-origin:0 0;">Çok bulutlu</div>
<div class="t" style="left:-0.8px;top:961.3px;font-size:25.00px;color:rgba(255,255,255,0.93);transform:scaleX(0.883);transform-origin:0 0;text-shadow:0 0 1px rgba(120,120,120,0.25);">Belda DEMİR ÇAĞLAYAN adlı kişinin ekranı</div>
<svg class="a" style="left:630px;top:955px" width="480" height="35">
<defs><linearGradient id="wg" x1="0" y1="0" x2="1" y2="1"><stop offset="0" stop-color="#3bb4f2"/><stop offset="1" stop-color="#0a6fd0"/></linearGradient></defs>
<rect x="4.5" y="4.5" width="10.5" height="10.5" fill="url(#wg)"/><rect x="16" y="4.5" width="10.5" height="10.5" fill="url(#wg)"/><rect x="4.5" y="16" width="10.5" height="10.5" fill="url(#wg)"/><rect x="16" y="16" width="10.5" height="10.5" fill="url(#wg)"/>
</svg>
<div class="a" style="left:668.5px;top:957px;width:195px;height:27px;border-radius:14px;background:#f7f4f2;border:1px solid #e2dedd"></div>
<svg class="a" style="left:676px;top:960px" width="20" height="20" fill="none" stroke="#333" stroke-width="1.6"><circle cx="8.5" cy="8.5" r="5"/><path d="M12.2 12.2l3.8 3.8"/></svg>
<div class="t" style="left:701.3px;top:964.6px;font-size:14.00px;color:#444;transform:scaleX(1.024);transform-origin:0 0;">Ara</div>
<svg class="a" style="left:816px;top:957px" width="50" height="28"><defs><linearGradient id="lake" x1="0" y1="0" x2="0" y2="1"><stop offset="0" stop-color="#a9bccb"/><stop offset="0.45" stop-color="#8fb4d2"/><stop offset="0.7" stop-color="#3aa2e6"/><stop offset="1" stop-color="#1f6fb8"/></linearGradient></defs>
<path d="M3 22c2-6 10-9 22-10 8-1 14-5 20-3 4 2 3 14-4 16-10 2-26 2-34 1-3 0-5-2-4-4z" fill="url(#lake)" stroke="#fff" stroke-width="1.5"/>
<path d="M17 20c2-4 10-5 16-4 3 0 5-1 7-2-2 4-5 6-10 7-5 1-10 1-13-1z" fill="#f4f6fb"/>
<path d="M18 20c-1-5 -2-9 -5-11" stroke="#f0f2f6" stroke-width="2" fill="none"/><path d="M11 8l3 1" stroke="#6a6a6a" stroke-width="1.6"/></svg>
<div class="a" style="left:1068px;top:954px;width:34.5px;height:33px;border-radius:4px;background:rgba(255,255,255,0.55)"></div>
<svg class="a" style="left:870px;top:955px" width="240" height="36">
<rect x="12" y="6.5" width="11" height="11" fill="#d6d6d6"/><rect x="6.5" y="12" width="11" height="13" fill="#1f1f1f"/><rect x="9.5" y="14" width="8" height="8" fill="#e6e6e6"/>
<defs><linearGradient id="edg" x1="0" y1="0" x2="1" y2="1"><stop offset="0" stop-color="#38c9a0"/><stop offset="0.5" stop-color="#1d8ee0"/><stop offset="1" stop-color="#0a52b8"/></linearGradient></defs>
<circle cx="57" cy="14.5" r="11.5" fill="url(#edg)"/><path d="M50 16c0-4 4-7 8-7s6 3 6 5h-9c0 4 5 6 10 3-2 4-6 6-10 5" fill="#e8f3fb"/>
<circle cx="96" cy="14.5" r="11.5" fill="#2fa54a"/><path d="M96 14.5L86 8.5A11.5 11.5 0 0 1 106 8.5z" fill="#e74335"/><path d="M96 14.5l10-6A11.5 11.5 0 0 1 97 26z" fill="#fbc02d"/><circle cx="96" cy="14.5" r="5.2" fill="#fff"/><circle cx="96" cy="14.5" r="4" fill="#2a7de1"/>
<path d="M124.5 5.5h8l2 2.5h13v17h-23z" fill="#f3b72c"/><rect x="124.5" y="10" width="23" height="15" fill="#fcd45a"/><rect x="131" y="18" width="10" height="4" fill="#2a6fd0"/>
<circle cx="176" cy="14.5" r="11.5" fill="#2067e6"/><text x="167.5" y="18.5" font-size="9.5" font-weight="bold" fill="#fff" font-family="Liberation Sans">zm</text>
<circle cx="218" cy="14.5" r="11" fill="#e0533a"/><path d="M218 3.5a11 11 0 0 1 11 11h-11z" fill="#ff8f6b"/><rect x="204.5" y="7.5" width="11" height="14" rx="1.5" fill="#c43e1c"/><text x="206.5" y="19" font-size="10" font-weight="bold" fill="#fff" font-family="Liberation Sans">P</text>
<rect x="209" y="30.5" width="13" height="2.5" rx="1.2" fill="#1f6fd0"/>
<rect x="54.5" y="30.5" width="5" height="2" rx="1" fill="#888"/><rect x="93.5" y="30.5" width="5" height="2" rx="1" fill="#888"/><rect x="173.5" y="30.5" width="5" height="2" rx="1" fill="#888"/>
</svg>
<svg class="a" style="left:1470px;top:955px" width="180" height="32" fill="none" stroke="#333" stroke-width="1.5">
<path d="M5 19l5-5 5 5"/>
<path d="M32 11.5h14M32 20.5h14M41 9v5M37 18v5"/>
<path d="M60.5 21v-10l5 6 5-6v10M60 21h2M71 21h2" stroke-width="2"/>
<rect x="93" y="6" width="6" height="11" rx="3" stroke="#3d6fd6"/><path d="M90.5 14a5.5 5.5 0 0 0 11 0M96 19.5v4" stroke="#3d6fd6"/>
<path d="M117 13a12 12 0 0 1 15 0M119.5 16a8 8 0 0 1 10 0M122 19a4 4 0 0 1 5 0" stroke-width="1.4"/><circle cx="124.5" cy="21.5" r="1" fill="#333"/>
<path d="M140 12h3l4-4v14l-4-4h-3z" stroke-width="1.3"/><path d="M150 11a5 5 0 0 1 0 8M152.5 8.5a8.5 8.5 0 0 1 0 13" stroke-width="1.2"/>
<rect x="161" y="10" width="13" height="9" rx="1.5" stroke-width="1.3"/><rect x="163" y="12" width="5" height="5" fill="#333" stroke="none"/><path d="M175.5 13v3" stroke-width="1.5"/>
</svg>
<div class="t" style="left:1685.5px;top:957.8px;font-size:10.50px;color:#333;transform:scaleX(1.028);transform-origin:0 0;">20:42</div>
<div class="t" style="left:1659.2px;top:972.1px;font-size:10.50px;color:#333;transform:scaleX(1.011);transform-origin:0 0;">13.03.2026</div>
<!-- /taskbar -->
<div id="nav" class="a"></div>
<!-- fab -->
<div class="a" style="left:2px;top:801.5px;width:67px;height:67px;border-radius:50%;background:rgba(52,52,53,0.9);box-shadow:0 0 0 2px rgba(150,150,150,0.9) inset,0 1px 3px rgba(0,0,0,0.3)"></div>
<svg class="a" style="left:2px;top:801.5px" width="67" height="67"><path d="M21 46.5l1.5-6.5 16-16 5 5-16 16z" fill="#fff"/><path d="M40.5 22l3-3a1.8 1.8 0 0 1 2.5 0l2.5 2.5a1.8 1.8 0 0 1 0 2.5l-3 3z" fill="#fff"/></svg>
<!-- /fab -->
<svg class="a" style="left:720px;top:54px" width="18" height="20" fill="none" stroke="#fbe3d9" stroke-width="1.2"><path d="M5.5 12.5c-1.5-1.5-2.5-3-2.5-5a6 6 0 0 1 12 0c0 2-1 3.5-2.5 5v2h-7z"/><path d="M6 16.5h6M7 18.5h4"/></svg>
<!-- video -->
<div class="a" style="left:1312px;top:23.5px;width:393px;height:220.5px;border-radius:9px;overflow:hidden;background:#e3e4e6">
<svg width="393" height="221" viewBox="0 0 393 221">
<defs>
<filter id="bl" x="-10%" y="-10%" width="120%" height="120%"><feGaussianBlur stdDeviation="2.2"/></filter>
<filter id="bl2" x="-20%" y="-20%" width="140%" height="140%"><feGaussianBlur stdDeviation="1"/></filter>
<linearGradient id="wall" x1="0" y1="0" x2="1" y2="0"><stop offset="0" stop-color="#e0e2e5"/><stop offset="0.75" stop-color="#e5e6e8"/><stop offset="0.87" stop-color="#ebebed"/><stop offset="1" stop-color="#e9e9eb"/></linearGradient>
<radialGradient id="skin" cx="0.35" cy="0.35" r="0.75"><stop offset="0" stop-color="#dccbc0"/><stop offset="0.5" stop-color="#ccb5a7"/><stop offset="1" stop-color="#a88f80"/></radialGradient>
<linearGradient id="neck" x1="0" y1="0" x2="0" y2="1"><stop offset="0" stop-color="#b49c8d"/><stop offset="1" stop-color="#c3ad9f"/></linearGradient>
<linearGradient id="hair" x1="0" y1="0" x2="1" y2="0"><stop offset="0" stop-color="#3a2a20"/><stop offset="0.5" stop-color="#54402f"/><stop offset="1" stop-color="#6e5846"/></linearGradient>
<linearGradient id="vio" x1="0" y1="0" x2="1" y2="1"><stop offset="0" stop-color="#c06a3a"/><stop offset="0.6" stop-color="#8a3a1a"/><stop offset="1" stop-color="#4a1e10"/></linearGradient>
<linearGradient id="vio2" x1="0" y1="0" x2="1" y2="1"><stop offset="0" stop-color="#8a6a5a"/><stop offset="0.5" stop-color="#5a3a2a"/><stop offset="1" stop-color="#3a2418"/></linearGradient>
</defs>
<rect width="393" height="221" fill="url(#wall)"/>
<rect x="341" y="0" width="52" height="221" fill="#eaeaec"/>
<!-- violin shadows -->
<g filter="url(#bl)" fill="#c9c9cc" opacity="0.8"><ellipse cx="231" cy="125" rx="22" ry="30"/><ellipse cx="268" cy="100" rx="20" ry="30"/></g>
<!-- bows -->
<g stroke="#7a736b" stroke-width="2.6" stroke-linecap="round"><path d="M278 18.5L289 116.5"/><path d="M286 17.5L299 142.5"/><path d="M294 16.5L310 151.5"/></g>
<g stroke="#3a302a" stroke-width="3.2"><path d="M287.5 104L289 116.5"/><path d="M297.5 128L299 142.5"/><path d="M308.5 136L310 151.5"/></g>
<!-- violin 3 (large dark) -->
<g filter="url(#bl2)">
<path d="M259 57c-9 0-15 5-15 14 0 6 4 9 4 13s-6 7-6 17c0 14 9 23 17 23s17-9 17-23c0-10-6-13-6-17s4-7 4-13c0-9-6-14-15-14z" fill="url(#vio2)"/>
<path d="M258 20v38" stroke="#1e1614" stroke-width="3"/><path d="M252 22h12M251 28h14M254 17h8" stroke="#1e1614" stroke-width="3.2"/>
<path d="M258 60v45" stroke="#2a1c16" stroke-width="3"/>
</g>
<!-- violin 2 -->
<g filter="url(#bl2)">
<path d="M225 88c-9 0-15 6-15 14 0 7 5 10 5 14s-6 8-6 16c0 10 8 16 16 16s17-6 17-16c0-8-6-12-6-16s5-7 5-14c0-8-7-14-16-14z" fill="url(#vio)"/>
<path d="M224 57v36" stroke="#201614" stroke-width="2.6"/><path d="M218 61h12M217 66h14M220 55h8" stroke="#201614" stroke-width="3"/>
<path d="M225 92v45" stroke="#2a1812" stroke-width="2.5"/>
</g>
<!-- violin 1 small -->
<g filter="url(#bl2)">
<path d="M196 113c-8 0-13 5-13 12s4 8 4 11c0 6 5 8 9 8s10-2 10-8c0-3 3-5 3-11s-5-12-13-12z" fill="#7a3a22"/>
<path d="M195 88v28" stroke="#201614" stroke-width="2.2"/><path d="M190 91h10M189 96h12" stroke="#201614" stroke-width="2.6"/>
</g>
<!-- white box -->
<rect x="226" y="184.5" width="54" height="37" fill="#eff0f1" stroke="#d3d4d6" stroke-width="1"/><path d="M226 196h54" stroke="#d6d7d9"/>
<rect x="280" y="195" width="24" height="26" fill="#d7d8da"/>
<!-- chair -->
<rect x="326" y="165.5" width="67" height="8" fill="#141414"/>
<g fill="#161616"><rect x="341" y="173" width="4.5" height="48"/><rect x="354" y="173" width="4.5" height="48"/><rect x="380" y="173" width="4.5" height="48"/><rect x="389" y="173" width="4.5" height="48"/></g>
<g fill="#d4583a"><rect x="341" y="173" width="4.5" height="5"/><rect x="354" y="173" width="4.5" height="5"/><rect x="380" y="173" width="4.5" height="5"/><rect x="389" y="173" width="4.5" height="5"/></g>
<!-- light shoulder/hair area -->
<path d="M178 128c12 10 26 40 38 93h-50z" fill="#cdbfb0" filter="url(#bl)"/>
<!-- hair right -->
<path d="M100 -5L148 -5C156 40 168 85 186 124C198 150 212 180 222 225L112 225C108 190 100 150 102 132C112 105 115 60 100 -5z" fill="url(#hair)" filter="url(#bl)"/>
<path d="M130 0C140 50 150 100 170 140C180 165 195 195 200 225" stroke="#8a705c" stroke-width="4" fill="none" filter="url(#bl)" opacity="0.6"/>
<!-- left hair -->
<rect x="-5" y="55" width="110" height="170" fill="#2a1e18" filter="url(#bl)"/>
<path d="M-5 60C5 100 12 130 30 150C40 170 45 200 48 225L-5 225z" fill="#221914" filter="url(#bl)"/><path d="M-5 90C8 120 20 140 36 160L44 225L-5 225z" fill="#1c1410" filter="url(#bl)"/>
<!-- neck -->
<path d="M28 115L106 115C104 150 106 190 114 225L40 225C38 190 34 150 28 115z" fill="url(#neck)" filter="url(#bl)"/>
<!-- face -->
<path d="M-5 -5L104 -5C112 30 116 70 113 100C110 122 98 134 72 137C48 137 30 128 16 110C6 97 0 82 -5 72z" fill="url(#skin)" filter="url(#bl)"/>
<ellipse cx="45" cy="40" rx="22" ry="18" fill="#ddcdc3" opacity="0.6" filter="url(#bl)"/>
<!-- eyes -->
<g filter="url(#bl2)">
<path d="M1 27c4-6 12-9 19-8 3 1 5 2 6 4-6 6-16 8-25 4z" fill="#231c1c"/><ellipse cx="12" cy="24" rx="4" ry="3" fill="#4a4040"/>
<path d="M65 12c6-5 14-7 21-6 3 1 5 3 6 4-6 5-15 7-27 2z" fill="#231c1c"/><ellipse cx="77" cy="10" rx="4" ry="3" fill="#4a4040"/>
<path d="M33 0v33" stroke="#e6dbd6" stroke-width="4" opacity="0.6"/>
<ellipse cx="37.5" cy="46" rx="2.4" ry="2.6" fill="#4a3028"/><ellipse cx="52" cy="43" rx="3" ry="2.4" fill="#4a3028"/>
<path d="M33 79c5-6 12-12 19-12 9 0 17 4 26 10-4 7-10 12-18 13-9 1-18 0-27-11z" fill="#a8736e"/>
<path d="M42 76c9-3 20-3 29 0l-2 4c-8-2-17-2-26 1z" fill="#eee5de"/>
<path d="M38 81c10-2 21-2 31-1-4 3-9 5-15 5-6 0-11-1-16-4z" fill="#4a2a2a"/>
</g>
</svg>
<div class="a" style="left:7.6px;top:189px;width:212.5px;height:24.5px;border-radius:7px;background:rgba(28,28,30,0.85)"></div>
</div>
<div class="t" style="left:1330.0px;top:216.3px;font-size:18.00px;color:#fff;transform:scaleX(0.933);transform-origin:0 0;">Belda DEMİR ÇAĞLAYAN</div>
<!-- /video -->
<!-- nav -->
<svg class="a" style="left:0;top:992px" width="1728" height="88">
<defs>
<linearGradient id="rn" x1="0" y1="0" x2="0" y2="1"><stop offset="0" stop-color="#f04a3e"/><stop offset="1" stop-color="#d9252a"/></linearGradient>
<linearGradient id="yf" x1="0" y1="0" x2="0" y2="1"><stop offset="0" stop-color="#fcc62d"/><stop offset="1" stop-color="#f3a811"/></linearGradient>
<linearGradient id="pi" x1="0" y1="0" x2="1" y2="1"><stop offset="0" stop-color="#7c4bf0"/><stop offset="1" stop-color="#4b36c9"/></linearGradient>
<linearGradient id="zb" x1="0" y1="0" x2="0" y2="1"><stop offset="0" stop-color="#3d7ff5"/><stop offset="1" stop-color="#1b5fe0"/></linearGradient>
<linearGradient id="wa" x1="0" y1="0" x2="0" y2="1"><stop offset="0" stop-color="#5fd660"/><stop offset="1" stop-color="#2fb54a"/></linearGradient>
</defs>
<g fill="#fff"><circle cx="513.5" cy="43.5" r="2.6"/><circle cx="523" cy="43.5" r="2.6"/><circle cx="532.5" cy="43.5" r="2.6"/><circle cx="513.5" cy="54.5" r="2.6"/><circle cx="523" cy="54.5" r="2.6"/><circle cx="532.5" cy="54.5" r="2.6"/><circle cx="513.5" cy="65.5" r="2.6"/><circle cx="523" cy="65.5" r="2.6"/><circle cx="532.5" cy="65.5" r="2.6"/></g>
<rect x="566.5" y="32" width="46" height="46" rx="16" fill="url(#rn)"/>
<path d="M578 42h20v15l-8 9h-12z" fill="#fff"/><path d="M590 66l8-9h-6a2 2 0 0 0-2 2z" fill="#f6c3c0"/><g stroke="#d9252a" stroke-width="1.5"><path d="M576 45h4M576 50h4M576 55h4M576 60h4"/></g>
<rect x="639" y="32" width="46" height="46" rx="16" fill="url(#yf)"/>
<path d="M649 44h9l2 3h15v19h-26z" fill="#fde9a8"/><rect x="649" y="49" width="26" height="17" rx="1.5" fill="#fffdf5"/>
<rect x="712" y="32" width="46" height="46" rx="16" fill="#fff"/><path d="M712 48v-1a15 15 0 0 1 15-15h16a15 15 0 0 1 15 15v1z" fill="#1bb3a3"/>
<text x="735" y="45.5" font-size="9" font-weight="bold" fill="#fff" text-anchor="middle" font-family="Liberation Sans">CUM</text>
<text x="735" y="72" font-size="21" font-weight="bold" fill="#111" text-anchor="middle" font-family="Liberation Sans" letter-spacing="-1">13</text>
<rect x="785" y="32" width="46" height="46" rx="16" fill="#fff"/><path d="M796 47a9 9 0 0 1 9-9h8a10 10 0 0 1 10 10v1a9 9 0 0 1-9 9h-6l-6 6v-6a7 7 0 0 1-6-7z" fill="#8ab4f8"/><path d="M794 48a9 9 0 0 1 9-9h9a9 9 0 0 1 9 9v1a9 9 0 0 1-9 9h-9a9 9 0 0 1-9-9z" fill="#1a73e8" opacity="0.9"/>
<rect x="857.5" y="32" width="46" height="46" rx="16" fill="url(#pi)"/><circle cx="880.7" cy="55" r="13" fill="#f1efff"/><path d="M866 66c6-3 20-16 26-25" stroke="#8fcbfb" stroke-width="3" fill="none"/>
<rect x="930.5" y="32" width="46" height="46" rx="16" fill="#c9cbcf"/><rect x="937" y="42" width="33" height="27" rx="4" fill="#fff"/><circle cx="953.6" cy="55.5" r="9" fill="#222"/><circle cx="953.6" cy="55.5" r="5.5" fill="#3c4a5a"/><circle cx="952" cy="53.5" r="1.6" fill="#9ab"/><circle cx="941.5" cy="45.5" r="1.5" fill="#e33"/>
<rect x="999.5" y="40" width="2" height="28.5" rx="1" fill="#bbb"/>
<rect x="1024.5" y="32" width="46" height="46" rx="16" fill="url(#zb)"/><text x="1047.5" y="58.5" font-size="11" font-weight="bold" fill="#fff" text-anchor="middle" font-family="Liberation Sans" letter-spacing="-0.3">zoom</text>
<rect x="1097" y="32" width="46" height="46" rx="16" fill="url(#wa)"/><circle cx="1120" cy="54.5" r="12" fill="none" stroke="#fff" stroke-width="3"/><path d="M1108 67l2.5-7 4.5 4z" fill="#fff"/><path d="M1114.5 50c0 5 5 10 10 10l2-2.5-3-2-1.5 1.5c-2-1-4-3-5-5l1.5-1.5-2-3z" fill="#fff"/>
<rect x="1170" y="32" width="46" height="46" rx="16" fill="#fff"/>
<g fill="none" stroke-width="6"><path d="M1202 46a13 13 0 0 0-19 3" stroke="#ea4335"/><path d="M1183 49a13 13 0 0 0 0 12" stroke="#fbbc05"/><path d="M1183 61a13 13 0 0 0 19 3" stroke="#34a853"/><path d="M1202 64a13 13 0 0 0 4-9h-12" stroke="#4285f4"/></g>
<g stroke="#fff" stroke-width="2.6" fill="none" stroke-linecap="round"><path d="M1347.5 45.5v20M1356 45.5v20M1364.5 45.5v20"/><rect x="1470" y="45" width="22" height="21" rx="8"/><path d="M1611 45l-12 10.5 12 10.5"/></g>
</svg>
<!-- /nav -->
</body></html>
